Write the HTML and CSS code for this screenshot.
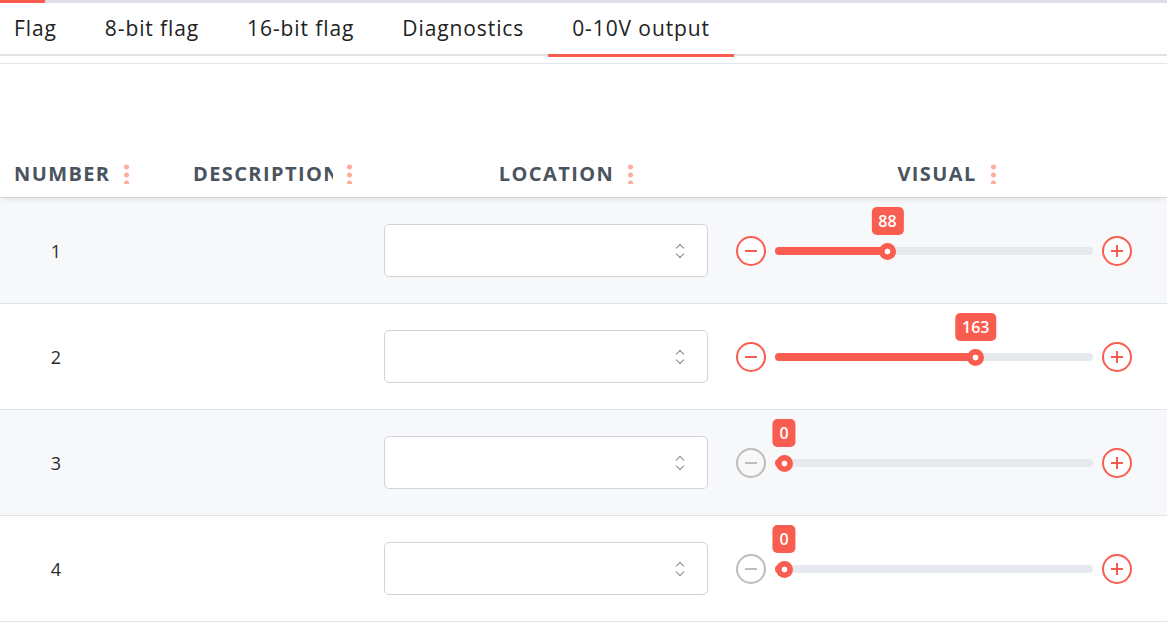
FILE: index.html
```html
<!DOCTYPE html>
<html lang="en">
<head>
    <meta charset="UTF-8">
    <meta name="viewport" content="width=device-width, initial-scale=1.0">
    <title>0-10V output</title>
    <link rel="stylesheet" href="styles.css">
</head>
<body>
    <div class="progress"><div class="progress-bar"></div></div>

    <nav class="tabs">
        <a href="#" class="tab first">Flag</a>
        <a href="#" class="tab">8-bit flag</a>
        <a href="#" class="tab">16-bit flag</a>
        <a href="#" class="tab">Diagnostics</a>
        <a href="#" class="tab active">0-10V output</a>
    </nav>
    <div class="subbar"></div>

    <div class="grid">
        <div class="grid-head">
            <div class="th th-number"><span class="th-label">Number</span><span class="kebab"></span></div>
            <div class="th th-desc"><span class="th-label">Description</span><span class="kebab"></span></div>
            <div class="th th-location"><span class="th-label">Location</span><span class="kebab"></span></div>
            <div class="th th-visual"><span class="th-label">Visual</span><span class="kebab"></span></div>
        </div>

        <div class="row">
            <div class="cell num">1</div>
            <div class="cell"></div>
            <div class="cell loc"><div class="select"><span class="chev"></span></div></div>
            <div class="cell visual">
                <button class="round"><span class="minus"></span></button>
                <div class="slider" style="--v:88"><div class="fill"></div><div class="thumb"><span class="badge">88</span></div></div>
                <button class="round"><span class="plus"></span></button>
            </div>
        </div>

        <div class="row">
            <div class="cell num">2</div>
            <div class="cell"></div>
            <div class="cell loc"><div class="select"><span class="chev"></span></div></div>
            <div class="cell visual">
                <button class="round"><span class="minus"></span></button>
                <div class="slider" style="--v:163"><div class="fill"></div><div class="thumb"><span class="badge">163</span></div></div>
                <button class="round"><span class="plus"></span></button>
            </div>
        </div>

        <div class="row">
            <div class="cell num">3</div>
            <div class="cell"></div>
            <div class="cell loc"><div class="select"><span class="chev"></span></div></div>
            <div class="cell visual">
                <button class="round disabled"><span class="minus"></span></button>
                <div class="slider" style="--v:0"><div class="fill"></div><div class="thumb"><span class="badge">0</span></div></div>
                <button class="round"><span class="plus"></span></button>
            </div>
        </div>

        <div class="row">
            <div class="cell num">4</div>
            <div class="cell"></div>
            <div class="cell loc"><div class="select"><span class="chev"></span></div></div>
            <div class="cell visual">
                <button class="round disabled"><span class="minus"></span></button>
                <div class="slider" style="--v:0"><div class="fill"></div><div class="thumb"><span class="badge">0</span></div></div>
                <button class="round"><span class="plus"></span></button>
            </div>
        </div>
    </div>
</body>
</html>
```
FILE: styles.css
```css
body {
    margin: 0;
    font-family: 'Open Sans', 'DejaVu Sans', sans-serif;
    color: #222;
    background: #fff;
    overflow: hidden;
}
.progress {
    height: 3px;
    background-color: #dde1e6;
}
.progress-bar {
    width: 45px;
    height: 3px;
    background-color: #f95d4f;
}
.tabs {
    display: flex;
    height: 51px;
    align-items: center;
    border-bottom: 2px solid #dfe3e8;
}
.tab {
    position: relative;
    height: 51px;
    line-height: 51px;
    padding: 0 24px;
    font-size: 21px;
    letter-spacing: 0.9px;
    color: #222;
    text-decoration: none;
}
.tab.first {
    padding-left: 14px;
}
.tab.active::after {
    content: '';
    position: absolute;
    left: 0;
    right: 0;
    bottom: -3px;
    height: 3px;
    background-color: #f95d4f;
}
.subbar {
    height: 7px;
    border-bottom: 1px solid #e3e6ea;
}
.grid {
    padding-top: 86px;
}
.grid-head, .row {
    display: grid;
    grid-template-columns: 179px 187px 360px 441px;
}
.grid-head {
    position: relative;
    height: 47px;
    border-bottom: 1px solid #d3d7dc;
    box-shadow: 0 4px 6px -3px rgba(0,0,0,0.1);
    z-index: 1;
}
.th {
    display: flex;
    align-items: center;
    gap: 14px;
    font-size: 20px;
    font-weight: 700;
    letter-spacing: 1.4px;
    text-transform: uppercase;
    color: #4a545e;
}
.th-label {
    white-space: nowrap;
    overflow: hidden;
}
.th-number {
    padding-left: 14px;
}
.th-number .th-label {
    width: 96px;
}
.th-desc {
    padding-left: 14px;
}
.th-desc .th-label {
    width: 140px;
}
.th-location {
    justify-content: center;
    padding-left: 40px;
}
.th-visual {
    justify-content: center;
}
.kebab {
    flex: none;
    width: 5px;
    height: 21px;
    background: radial-gradient(circle, #ffaca3 2.3px, transparent 2.8px) 0 0 / 5px 8px repeat-y;
}
.row {
    height: 105px;
    align-items: center;
    border-bottom: 1px solid #dfe2e6;
}
.row:nth-child(even) {
    background-color: #f7f8fa;
}
.num {
    width: 112px;
    text-align: center;
    font-size: 18px;
    color: #2b2b2b;
}
.loc {
    padding: 0 18px;
}
.select {
    display: flex;
    align-items: center;
    justify-content: flex-end;
    height: 51px;
    padding-right: 22px;
    border: 1px solid #cfd4da;
    border-radius: 5px;
    background-color: #fff;
}
.chev {
    position: relative;
    width: 10px;
    height: 16px;
}
.chev::before, .chev::after {
    content: '';
    position: absolute;
    left: 2px;
    width: 5px;
    height: 5px;
    border-left: 1.5px solid #7f8a95;
    border-top: 1.5px solid #7f8a95;
}
.chev::before {
    top: 2px;
    transform: rotate(45deg);
}
.chev::after {
    bottom: 2px;
    transform: rotate(225deg);
}
.visual {
    display: flex;
    align-items: center;
    gap: 9px;
    padding-left: 10px;
}
.round {
    position: relative;
    flex: none;
    width: 30px;
    height: 30px;
    padding: 0;
    border: 2.3px solid #f95d4f;
    border-radius: 50%;
    background: #fff;
    color: #f95d4f;
    cursor: pointer;
}
.round.disabled {
    border-color: #bdbdbd;
    color: #bdbdbd;
    background: transparent;
}
.minus, .plus {
    position: absolute;
    left: 50%;
    top: 50%;
    width: 12px;
    height: 2px;
    margin: -1px 0 0 -6px;
    background-color: currentColor;
}
.plus::after {
    content: '';
    position: absolute;
    left: 5px;
    top: -5px;
    width: 2px;
    height: 12px;
    background-color: currentColor;
}
.slider {
    position: relative;
    width: 318px;
    height: 8px;
    margin-top: 1px;
    border-radius: 4px;
    background-color: #e6e9ed;
}
.fill {
    width: calc(9px + 300px * var(--v) / 255);
    height: 8px;
    border-radius: 4px;
    background-color: #f95d4f;
}
.thumb {
    position: absolute;
    top: 50%;
    left: calc(9px + 300px * var(--v) / 255);
    width: 17px;
    height: 17px;
    margin: -8.5px 0 0 -8.5px;
    border-radius: 50%;
    background: radial-gradient(circle, #fff 2.6px, #f95d4f 3.2px);
}
.badge {
    position: absolute;
    left: 50%;
    bottom: 25px;
    transform: translateX(-50%);
    height: 28px;
    line-height: 28px;
    padding: 0 7px;
    border-radius: 5px;
    background-color: #f95d4f;
    color: #fff;
    font-size: 16px;
    font-weight: 600;
    white-space: nowrap;
}
```
